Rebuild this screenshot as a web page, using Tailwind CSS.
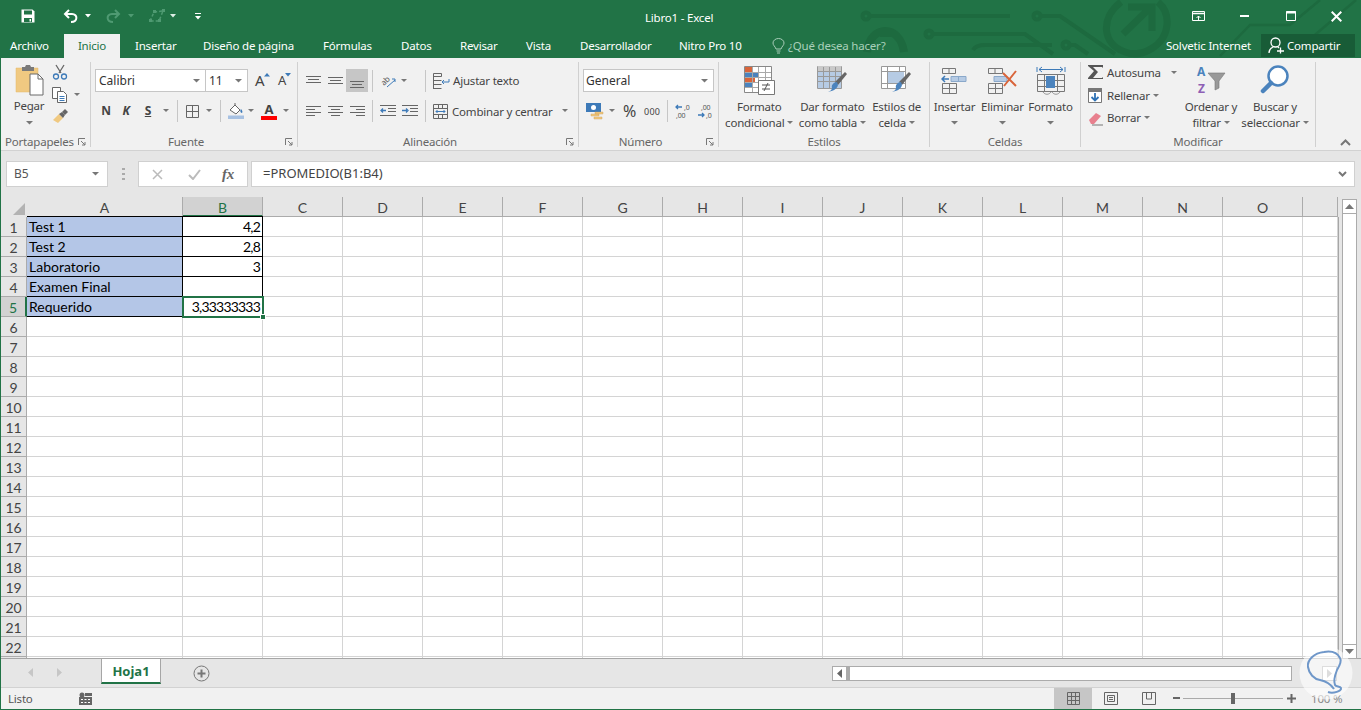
<!DOCTYPE html>
<html lang="es">
<head>
<meta charset="UTF-8">
<title>Libro1 - Excel</title>
<script src="https://cdn.jsdelivr.net/npm/@tailwindcss/browser@4"></script>
</head>
<body class="m-0 overflow-hidden bg-white font-['Noto_Sans',sans-serif] text-[11.5px] tracking-[-.2px] text-[#444]">
<div class="relative w-[1361px] h-[710px] overflow-hidden flex flex-col border-l border-[#217346]">

  <!-- title bar + tabs -->
  <header class="relative w-full h-[58px] shrink-0 bg-[#217346] text-white">
    <svg class="absolute left-[819px] top-0" width="541" height="58" fill="none" stroke="#1d6a3f" stroke-width="4">
      <circle cx="46" cy="16" r="3.5"/><path d="M50 16H190"/><circle cx="217" cy="16" r="3.5"/><path d="M221 16H240L295 54"/>
      <path d="M47 52C50 24 80 24 84 52" stroke-width="8"/><path d="M60 35H72" stroke-width="4"/>
      <circle cx="109" cy="34" r="3.5"/><path d="M113 34H205L233 54"/><path d="M153 50Q156 45 165 45H232"/><circle cx="246" cy="45" r="3.5"/><path d="M250 45H255L268 54"/>
      <path d="M301 2C280 18 282 44 305 52C322 58 345 46 347 25C348 14 344 7 338 2" stroke-width="7"/><path d="M303 34L331 7M308 7H332V31" stroke-width="7"/>
      <path d="M400 56L430 25H470L500 0" stroke-width="2.5"/><path d="M470 56L536 0" stroke-width="2.5"/>
    </svg>

    <!-- quick access -->
    <div class="relative flex items-center h-[32px] pl-[20px]">
      <svg width="14" height="14" viewBox="0 0 14 14"><path d="M.5.500h11l2 2v11H.500z" fill="#fff"/><path d="M3 1.500h8v4H3zM3 9h8v4H3z" fill="#217346"/><path d="M8.500 10h1.500v2.500H8.500z" fill="#fff"/></svg>
      <svg class="ml-[28px]" width="15" height="14" viewBox="0 0 15 14" fill="none" stroke="#fff" stroke-width="2"><path d="M6 1L2 5l4 4M2 5h7c6 0 6 8-1 8"/></svg>
      <svg class="ml-[7px]" width="6" height="4"><path d="M0 0h6L3 3.500z" fill="#fff"/></svg>
      <svg class="ml-[15px]" width="15" height="14" viewBox="0 0 15 14" fill="none" stroke="#4f9a72" stroke-width="2"><path d="M9 1l4 4-4 4M13 5H6c-6 0-6 8 1 8"/></svg>
      <svg class="ml-[7px]" width="6" height="4"><path d="M0 0h6L3 3.500z" fill="#4f9a72"/></svg>
      <svg class="ml-[15px]" width="17" height="14" viewBox="0 0 17 14" fill="none" stroke="#4f9a72" stroke-width="1.500"><path d="M1 12L5 3l9-1-4 10z" stroke-dasharray="3 2"/><path d="M0 10h3v3H0zM4 1h3v3H4zM13 0h3v3h-3zM9 10h3v3H9z" fill="#4f9a72" stroke="none"/></svg>
      <svg class="ml-[4px]" width="6" height="4"><path d="M0 0h6L3 3.500z" fill="#dfeee6"/></svg>
      <svg class="ml-[19px]" width="6" height="7"><path d="M0 0h6v1H0zM0 3h6L3 6.500z" fill="#fff"/></svg>
    </div>
    <div class="absolute left-[644px] top-[9px] leading-[18px]">Libro1 - Excel</div>

    <!-- window buttons -->
    <div class="absolute right-0 top-0 h-[32px] flex items-center">
      <svg class="mr-[35px]" width="13" height="11" fill="none" stroke="#fff"><path d="M.5.500h12v9H.500z"/><path d="M.5 2.500h12" stroke-width="1.500"/><path d="M6.500 9V5M4.500 7l2-2 2 2" /></svg>
      <svg class="mr-[37px]" width="9" height="3"><path d="M0 0h9v2H0z" fill="#fff"/></svg>
      <svg class="mr-[35px]" width="10" height="10" fill="none" stroke="#fff"><path d="M.5.500h9v9h-9z"/><path d="M0 1.500h10" stroke-width="2"/></svg>
      <svg class="mr-[19px]" width="11" height="11" fill="none" stroke="#fff" stroke-width="2"><path d="M.7.700l9.600 9.600M10.300.700L.7 10.300"/></svg>
    </div>

    <!-- tabs -->
    <nav class="absolute left-[-1px] top-[34px] h-[24px] w-full flex items-center">
      <span class="ml-[10px] w-[54px]">Archivo</span>
      <span class="flex items-center justify-center w-[56px] h-[24px] bg-[#f1f1f1] text-[#217346]">Inicio</span>
      <span class="ml-[15px] w-[68px]">Insertar</span>
      <span class="w-[120px]">Diseño de página</span>
      <span class="w-[78px]">Fórmulas</span>
      <span class="w-[59px]">Datos</span>
      <span class="w-[66px]">Revisar</span>
      <span class="w-[54px]">Vista</span>
      <span class="w-[99px]">Desarrollador</span>
      <span class="w-[93px]">Nitro Pro 10</span>
      <svg width="13" height="16" viewBox="0 0 13 16" fill="none" stroke="#a9cdb9"><path d="M4 11C3 8 1 7.500 1 5a5.500 4.500 0 0 1 11 0c0 2.500-2 3-3 6zM4.500 13h4M5 15h3"/></svg>
      <span class="ml-[3px] text-[#a9d0ba]">¿Qué desea hacer?</span>
      <span class="absolute left-[1166px]">Solvetic Internet</span>
      <span class="absolute left-[1261px] top-0 w-[94px] h-[23px] flex items-center bg-[#185c37]">
        <svg class="ml-[7px]" width="16" height="17" viewBox="0 0 16 17" fill="none" stroke="#fff" stroke-width="1.300"><circle cx="7.500" cy="5.500" r="4.500"/><path d="M1 16c0-3 2-5 4-6M10 10l1 1M9 14h7M12.500 10.500v6"/></svg>
        <span class="ml-[3px]">Compartir</span>
      </span>
    </nav>
  </header>

  <!-- ribbon -->
  <section class="relative w-full h-[93px] shrink-0 flex bg-[#f1f1f1] border-b border-[#d2d2d2] text-[#444]">

    <!-- Portapapeles -->
    <div class="relative w-[90px] h-[85px] mt-[4px] border-r border-[#d0d0d0] shrink-0">
      <div class="flex pt-[2px] pl-[15px]">
        <div class="flex flex-col items-center w-[26px]">
          <svg width="29" height="32" viewBox="0 0 29 32">
            <path d="M1 4h22v24H1z" fill="#f0c981" stroke="#e5b968" stroke-width=".5"/><path d="M7 3h3l1-2h4l1 2h3v4H7z" fill="#7a7a7a"/>
            <path d="M15 10h8l5 5v16H15z" fill="#fff" stroke="#6a6a6a"/><path d="M23 10v5h5" fill="none" stroke="#6a6a6a"/>
          </svg>
          <span class="mt-[1px] leading-[17px]">Pegar</span>
          <svg class="mt-[7px]" width="7" height="4"><path d="M0 0h7L3.500 3.500z" fill="#777"/></svg>
        </div>
        <div class="flex flex-col ml-[10px]">
          <svg width="16" height="16" viewBox="0 0 16 16" fill="none"><path d="M4 1l5 8M12 1L7 9" stroke="#666" stroke-width="1.300"/><circle cx="4" cy="12.500" r="2.500" stroke="#3d7ab8" stroke-width="1.300"/><circle cx="12" cy="12.500" r="2.500" stroke="#3d7ab8" stroke-width="1.300"/></svg>
          <div class="flex items-center mt-[7px]">
            <svg width="16" height="16" viewBox="0 0 16 16" fill="#fff" stroke="#666"><path d="M.5.500h8v11h-8z"/><path d="M5.500 4.500h6l3 3v8h-9z"/><path d="M7.500 9.500h5M7.500 11.500h5M7.500 13.500h5" stroke="#3d7ab8"/></svg>
            <svg class="ml-[6px]" width="6" height="4"><path d="M0 0h6L3 3z" fill="#777"/></svg>
          </div>
          <svg class="mt-[6px]" width="17" height="16" viewBox="0 0 17 16"><path d="M1 11l6-6 4 4-5 5z" fill="#f0c981"/><path d="M7 5l3-2 3 3-2 3z" fill="#666"/><path d="M10 3l3-3 3 3-3 3z" fill="#666"/></svg>
        </div>
      </div>
      <div class="absolute left-0 bottom-[-3px] w-full flex items-center text-[#666] leading-[16px] pl-[4px]"><span>Portapapeles</span><svg class="absolute right-[4px] top-[4px]" width="8" height="8" fill="none" stroke="#777"><path d="M.5 7V.5H7M3 3l4 4M7 4v3H4"/></svg></div>
    </div>

    <!-- Fuente -->
    <div class="relative w-[207px] h-[85px] mt-[4px] border-r border-[#d0d0d0] shrink-0">
      <div class="flex items-center pt-[7px] pl-[4px] h-[30px]">
        <div class="w-[111px] h-[23px] bg-white border border-[#c6c6c6] flex items-center px-[3px] justify-between text-[12px] tracking-normal"><span class="text-[#333]">Calibri</span><svg class="mr-[2px]" width="7" height="4"><path d="M0 0h7L3.500 3.500z" fill="#777"/></svg></div>
        <div class="w-[42px] h-[23px] bg-white border border-[#c6c6c6] border-l-0 flex items-center px-[3px] justify-between text-[12px] tracking-normal"><span class="text-[#333]">11</span><svg class="mr-[2px]" width="7" height="4"><path d="M0 0h7L3.500 3.500z" fill="#777"/></svg></div>
        <span class="relative ml-[7px] w-[16px] text-[15px] leading-none">A<svg class="absolute left-[9px] top-[0px]" width="6" height="4"><path d="M0 3.500h6L3 0z" fill="#3d7ab8"/></svg></span>
        <span class="relative ml-[7px] w-[16px] text-[13px] leading-none">A<svg class="absolute left-[7px] top-[-1px]" width="6" height="4"><path d="M0 0h6L3 3.500z" fill="#3d7ab8"/></svg></span>
      </div>
      <div class="flex items-center pt-[7px] pl-[5px] h-[31px]">
        <b class="w-[20px] text-center font-bold text-[12px]">N</b>
        <i class="w-[20px] text-center font-bold text-[12px]">K</i>
        <u class="w-[24px] text-center font-bold text-[12px]">S</u>
        <svg class="ml-[3px]" width="6" height="4"><path d="M0 0h6L3 3z" fill="#777"/></svg>
        <span class="ml-[8px] w-px h-[22px] bg-[#c6c6c6]"></span>
        <svg class="ml-[8px]" width="13" height="13" fill="none" stroke="#666"><path d="M.5.500h12v12H.500zM6.500 1v11M1 6.500h11"/></svg>
        <svg class="ml-[7px]" width="6" height="4"><path d="M0 0h6L3 3z" fill="#777"/></svg>
        <span class="ml-[8px] w-px h-[22px] bg-[#c6c6c6]"></span>
        <svg class="ml-[7px]" width="17" height="16" viewBox="0 0 17 16"><path d="M2 7l5-5 5 5-4 4z" fill="#fff" stroke="#666"/><path d="M7 2V0" stroke="#666"/><path d="M13 6c1 1 2 3 1 4-2 0-2-3-1-4z" fill="#3d7ab8"/><path d="M0 12.500h16V16H0z" fill="#a7c1e2"/></svg>
        <svg class="ml-[3px]" width="6" height="4"><path d="M0 0h6L3 3z" fill="#777"/></svg>
        <span class="ml-[7px] relative w-[16px] h-[18px] text-center font-bold text-[13px] leading-[14px]">A<span class="absolute left-0 bottom-0 w-[16px] h-[4px] bg-[#f00]"></span></span>
        <svg class="ml-[6px]" width="6" height="4"><path d="M0 0h6L3 3z" fill="#777"/></svg>
      </div>
      <div class="absolute left-0 bottom-[-3px] w-full pr-[16px] text-center text-[#666] leading-[16px]">Fuente<svg class="absolute right-[4px] top-[4px]" width="8" height="8" fill="none" stroke="#777"><path d="M.5 7V.5H7M3 3l4 4M7 4v3H4"/></svg></div>
    </div>

    <!-- Alineación -->
    <div class="relative w-[281px] h-[85px] mt-[4px] border-r border-[#d0d0d0] shrink-0">
      <div class="flex items-center pt-[7px] pl-[8px] h-[30px]">
        <svg width="15" height="9" stroke="#666"><path d="M0 .5h15M2 3.500h11M0 6.500h15" /></svg>
        <svg class="ml-[7px]" width="15" height="9" stroke="#666"><path d="M0 1.500h15M2 4.500h11M0 7.500h15"/></svg>
        <span class="ml-[3px] w-[22px] h-[23px] bg-[#c6c6c6] flex items-end justify-center pb-[4px]"><svg width="14" height="7" stroke="#666"><path d="M0 .5h14M2 3.500h10M0 6.500h14"/></svg></span>
        <span class="ml-[4px] w-px h-[22px] bg-[#c6c6c6]"></span>
        <svg class="ml-[7px] overflow-visible" width="16" height="14" viewBox="0 0 16 14" fill="none"><text transform="rotate(-45 6 7)" x="1" y="9" font-size="8" fill="#555" stroke="none">ab</text><path d="M7 13l8-7M12 5h3v3" stroke="#3d7ab8"/></svg>
        <svg class="ml-[5px]" width="6" height="4"><path d="M0 0h6L3 3z" fill="#777"/></svg>
        <span class="ml-[18px] w-px h-[22px] bg-[#c6c6c6]"></span>
        <svg class="ml-[7px]" width="17" height="16" viewBox="0 0 17 16" fill="none" stroke="#666"><path d="M.5.500h8v3h-8zM.5 7.500h8M.5 11.500h8M.5 15.500h8"/><path d="M.5 3v13"/><path d="M16 6v3H9m2-2L9 9l2 2" stroke="#3d7ab8"/></svg>
        <span class="ml-[3px] text-[#444] whitespace-nowrap">Ajustar texto</span>
      </div>
      <div class="flex items-center pt-[7px] pl-[8px] h-[31px]">
        <svg width="15" height="11" stroke="#666"><path d="M0 .5h15M0 3.500h9M0 6.500h15M0 9.500h9"/></svg>
        <svg class="ml-[7px]" width="15" height="11" stroke="#666"><path d="M0 .5h15M3 3.500h9M0 6.500h15M3 9.500h9"/></svg>
        <svg class="ml-[7px]" width="15" height="11" stroke="#666"><path d="M0 .5h15M6 3.500h9M0 6.500h15M6 9.500h9"/></svg>
        <span class="ml-[7px] w-px h-[22px] bg-[#c6c6c6]"></span>
        <svg class="ml-[7px]" width="16" height="12" stroke="#666" fill="none"><path d="M0 .5h16M8 3.500h8M8 6.500h8M0 10.500h16"/><path d="M6 5.500H1m2-2L1 5.500l2 2" stroke="#3d7ab8" stroke-width="1.300"/></svg>
        <svg class="ml-[6px]" width="16" height="12" stroke="#666" fill="none"><path d="M0 .5h16M8 3.500h8M8 6.500h8M0 10.500h16"/><path d="M0 5.500h5M4 3.500l2 2-2 2" stroke="#3d7ab8" stroke-width="1.300"/></svg>
        <span class="ml-[7px] w-px h-[22px] bg-[#c6c6c6]"></span>
        <svg class="ml-[7px]" width="15" height="15" fill="none" stroke="#666"><path d="M.5.500h14v14H.500zM1 4.500h13M1 10.500h13M5.500 1v3M9.500 1v3M5.500 11v3M9.500 11v3"/><path d="M3 7.500h9M4.500 6L3 7.500 4.500 9M10.500 6L12 7.500 10.500 9" stroke="#3d7ab8"/></svg>
        <span class="ml-[4px] pt-[1px] w-[110px] text-[#444] whitespace-nowrap">Combinar y centrar</span>
        <svg width="6" height="4"><path d="M0 0h6L3 3z" fill="#777"/></svg>
      </div>
      <div class="absolute left-0 bottom-[-3px] w-full pr-[16px] text-center text-[#666] leading-[16px]">Alineación<svg class="absolute right-[4px] top-[4px]" width="8" height="8" fill="none" stroke="#777"><path d="M.5 7V.5H7M3 3l4 4M7 4v3H4"/></svg></div>
    </div>

    <!-- Número -->
    <div class="relative w-[140px] h-[85px] mt-[4px] border-r border-[#d0d0d0] shrink-0">
      <div class="flex items-center pt-[7px] pl-[4px] h-[30px]">
        <div class="w-[131px] h-[23px] bg-white border border-[#c6c6c6] flex items-center px-[2px] justify-between text-[12px] tracking-normal"><span class="text-[#333]">General</span><svg class="mr-[3px]" width="7" height="4"><path d="M0 0h7L3.500 3.500z" fill="#777"/></svg></div>
      </div>
      <div class="flex items-center pt-[7px] pl-[7px] h-[31px]">
        <svg width="18" height="17" viewBox="0 0 18 17"><path d="M0 0h15v9H0z" fill="#3d7ab8"/><circle cx="7.500" cy="4.500" r="2.500" fill="#fff"/><path d="M9 9h8v2H9zM5 11h8v2H5zM8 14h8v2H8z" fill="#f0c981" stroke="#c99f52" stroke-width=".4"/></svg>
        <svg class="ml-[5px]" width="6" height="4"><path d="M0 0h6L3 3z" fill="#777"/></svg>
        <span class="ml-[8px] text-[16px] leading-none">%</span>
        <span class="ml-[8px] text-[9px] leading-none tracking-[.2px]">000</span>
        <span class="ml-[7px] w-px h-[22px] bg-[#c6c6c6]"></span>
        <svg class="ml-[7px]" width="16" height="15" viewBox="0 0 16 15"><path d="M7 3H1m2-2L1 3l2 2" fill="none" stroke="#3d7ab8" stroke-width="1.300"/><text x="9" y="6" font-size="7" fill="#555">,0</text><text x="1" y="14" font-size="7" fill="#555">,00</text></svg>
        <svg class="ml-[7px]" width="16" height="15" viewBox="0 0 16 15"><text x="3" y="6" font-size="7" fill="#555">,00</text><path d="M0 11h6M4 9l2 2-2 2" fill="none" stroke="#3d7ab8" stroke-width="1.300"/><text x="8" y="14" font-size="7" fill="#555">,0</text></svg>
      </div>
      <div class="absolute left-0 bottom-[-3px] w-full pr-[16px] text-center text-[#666] leading-[16px]">Número<svg class="absolute right-[4px] top-[4px]" width="8" height="8" fill="none" stroke="#777"><path d="M.5 7V.5H7M3 3l4 4M7 4v3H4"/></svg></div>
    </div>

    <!-- Estilos -->
    <div class="relative w-[211px] h-[85px] mt-[4px] border-r border-[#d0d0d0] shrink-0">
      <div class="flex pt-[2px]">
        <div class="flex flex-col items-center w-[82px]">
          <svg width="31" height="32" viewBox="0 0 31 32"><path d="M.5 2.500h27v26H.500z" fill="#fff" stroke="#888"/><path d="M1 3h7v5H1z" fill="#d9653b"/><path d="M1 8h13v5H1z" fill="#4b83bd"/><path d="M1 13h10v5H1z" fill="#d9653b"/><path d="M1 18h7v5H1z" fill="#4b83bd"/><path d="M8.500 3v25M14.500 3v25M21.500 3v13M1 8.500h26M1 13.500h26M1 18.500h14M1 23.500h14" stroke="#a9a9a9" fill="none"/><path d="M14.500 16.500h16v14h-16z" fill="#fff" stroke="#777"/><path d="M18 21h8M18 25h8M24 19l-4 8" stroke="#555" fill="none"/></svg>
          <span class="mt-[2px] leading-[17px]">Formato</span>
          <span class="leading-[15px] whitespace-nowrap">condicional <svg class="inline align-[2px]" width="6" height="4"><path d="M0 0h6L3 3z" fill="#777"/></svg></span>
        </div>
        <div class="flex flex-col items-center w-[62px] ml-[2px]">
          <svg width="31" height="32" viewBox="0 0 31 32"><path d="M.5 2.500h24v22H.500z" fill="#fff" stroke="#999"/><path d="M1 7h23v17H1z" fill="#b6cbe4"/><path d="M1 2h23v5H1z" fill="#c9c9c9"/><path d="M6.500 3v21M12.500 3v21M18.500 3v21M1 7.500h23M1 12.500h23M1 17.500h23" stroke="#999" fill="none"/><path d="M18 18L28 8l2 2-9 11z" fill="#666"/><path d="M15 24c-1-3 2-6 5-6l1 3c-1 4-5 6-10 7 2-1 4-2 4-4z" fill="#4b83bd"/></svg>
          <span class="mt-[2px] leading-[17px] whitespace-nowrap">Dar formato</span>
          <span class="leading-[15px] whitespace-nowrap">como tabla <svg class="inline align-[2px]" width="6" height="4"><path d="M0 0h6L3 3z" fill="#777"/></svg></span>
        </div>
        <div class="flex flex-col items-center w-[66px] ml-[1px]">
          <svg width="31" height="32" viewBox="0 0 31 32"><path d="M.5 2.500h24v22H.500z" fill="#fff" stroke="#999"/><path d="M6 7h17v12H6z" fill="#b6cbe4"/><path d="M6.500 3v21M18.500 3v4M1 7.500h23M1 19.500h23" stroke="#999" fill="none"/><path d="M18 18L28 8l2 2-9 11z" fill="#666"/><path d="M15 24c-1-3 2-6 5-6l1 3c-1 4-5 6-10 7 2-1 4-2 4-4z" fill="#4b83bd"/></svg>
          <span class="mt-[2px] leading-[17px] whitespace-nowrap">Estilos de</span>
          <span class="leading-[15px] whitespace-nowrap">celda <svg class="inline align-[2px]" width="6" height="4"><path d="M0 0h6L3 3z" fill="#777"/></svg></span>
        </div>
      </div>
      <div class="absolute left-0 bottom-[-3px] w-full text-center text-[#666] leading-[16px]">Estilos</div>
    </div>

    <!-- Celdas -->
    <div class="relative w-[151px] h-[85px] mt-[4px] border-r border-[#d0d0d0] shrink-0">
      <div class="flex pt-[2px]">
        <div class="flex flex-col items-center w-[49px]">
          <svg width="28" height="32" viewBox="0 0 28 32" fill="none" stroke="#777"><path d="M1.500 4.500h13v5h-13zM8 5v4M1.500 19.500h14v10h-14zM8.500 20v9M2 24.500h13"/><path d="M10 12.500h15v5H10zM17.500 13v4" fill="#b6cbe4" stroke="#8aa8ca"/><path d="M8 15H1m3-3l-3 3 3 3" stroke="#3d7ab8" stroke-width="1.500"/></svg>
          <span class="mt-[2px] leading-[17px]">Insertar</span>
          <svg class="mt-[6px]" width="7" height="4"><path d="M0 0h7L3.500 3.500z" fill="#777"/></svg>
        </div>
        <div class="flex flex-col items-center w-[47px]">
          <svg width="32" height="32" viewBox="0 0 32 32" fill="none" stroke="#777"><path d="M1.500 4.500h14v5h-14zM8 5v4M1.500 19.500h14v10h-14zM8.500 20v9M2 24.500h13"/><path d="M7 12.500h13v5H7z" fill="#b6cbe4" stroke="#8aa8ca"/><path d="M16 9l13 13M29 7L17 22" stroke="#d9653b" stroke-width="2"/></svg>
          <span class="mt-[2px] leading-[17px]">Eliminar</span>
          <svg class="mt-[6px]" width="7" height="4"><path d="M0 0h7L3.500 3.500z" fill="#777"/></svg>
        </div>
        <div class="flex flex-col items-center w-[49px]">
          <svg width="30" height="32" viewBox="0 0 30 32" fill="none" stroke="#777"><path d="M1.500 10.500h27v17h-27zM8.500 11v16M21.500 11v16M1 16.500h28M1 22.500h28"/><path d="M10 12h9v12h-9z" fill="#4b83bd" stroke="none"/><path d="M1 3v5M29 3v5M3 5.500h24M6 3L3 5.500 6 8M24 3l3 2.500L24 8" stroke="#3d7ab8"/><path d="M7 28c2 3 6 3 8 0M16 28c2 3 6 3 8 0" stroke="#999"/></svg>
          <span class="mt-[2px] leading-[17px]">Formato</span>
          <svg class="mt-[6px]" width="7" height="4"><path d="M0 0h7L3.500 3.500z" fill="#777"/></svg>
        </div>
      </div>
      <div class="absolute left-0 bottom-[-3px] w-full text-center text-[#666] leading-[16px]">Celdas</div>
    </div>

    <!-- Modificar -->
    <div class="relative w-[235px] h-[85px] mt-[4px] border-r border-[#d0d0d0] shrink-0">
      <div class="flex">
        <div class="flex flex-col pl-[7px] w-[120px] -mt-[1px]">
          <div class="flex items-center h-[23px]">
            <svg width="16" height="15" viewBox="0 0 16 15"><path d="M0 0h15v3l-1-1H5l5 5-5 6h9l1-1v2H0v-1l6-7L0 1z" fill="#555"/></svg>
            <span class="ml-[3px] w-[60px]">Autosuma</span>
            <svg class="ml-[4px]" width="6" height="4"><path d="M0 0h6L3 3z" fill="#777"/></svg>
          </div>
          <div class="flex items-center h-[23px]">
            <svg width="15" height="15" viewBox="0 0 15 15" fill="#fff" stroke="#777"><path d="M.5.500h13v14H.500z"/><path d="M.5.500h13v3H.500z" fill="#777"/><path d="M7 5v7M3.500 9L7 12.500 10.500 9" fill="none" stroke="#2f72b5" stroke-width="1.800"/></svg>
            <span class="ml-[4px]">Rellenar</span>
            <svg class="ml-[3px]" width="6" height="4"><path d="M0 0h6L3 3z" fill="#777"/></svg>
          </div>
          <div class="flex items-center h-[22px]">
            <svg width="15" height="15" viewBox="0 0 15 15"><path d="M1 9l7-7 5 3-7 8H3z" fill="#e8808e"/><path d="M4 14h11" stroke="#777"/></svg>
            <span class="ml-[4px]">Borrar</span>
            <svg class="ml-[3px]" width="6" height="4"><path d="M0 0h6L3 3z" fill="#777"/></svg>
          </div>
        </div>
        <div class="flex flex-col items-center w-[72px] -ml-[26px] pt-[2px]">
          <svg width="31" height="32" viewBox="0 0 31 32"><text x="1" y="12" font-size="12" font-weight="700" fill="#4b83bd" font-family="Noto Sans">A</text><text x="2" y="29" font-size="12" font-weight="700" fill="#8e5fb5" font-family="Noto Sans">Z</text><path d="M12 9h17l-6 8v7l-4 2v-9z" fill="#999" stroke="#777" stroke-width=".6"/></svg>
          <span class="mt-[2px] leading-[17px] whitespace-nowrap">Ordenar y</span>
          <span class="leading-[15px] whitespace-nowrap">filtrar <svg class="inline align-[2px]" width="6" height="4"><path d="M0 0h6L3 3z" fill="#777"/></svg></span>
        </div>
        <div class="flex flex-col items-center w-[70px] ml-[-7px] pt-[2px]">
          <svg width="30" height="32" viewBox="0 0 30 32" fill="none"><circle cx="18" cy="12" r="9.500" stroke="#4b83bd" stroke-width="2.500" fill="#fff"/><path d="M11 19L3 27" stroke="#4b83bd" stroke-width="4.500" stroke-linecap="round"/></svg>
          <span class="mt-[2px] leading-[17px] whitespace-nowrap">Buscar y</span>
          <span class="leading-[15px] whitespace-nowrap">seleccionar <svg class="inline align-[2px]" width="6" height="4"><path d="M0 0h6L3 3z" fill="#777"/></svg></span>
        </div>
      </div>
      <div class="absolute left-0 bottom-[-3px] w-full text-center text-[#666] leading-[16px]">Modificar</div>
    </div>
    <svg class="absolute left-[1339px] top-[81px]" width="11" height="7" fill="none" stroke="#777" stroke-width="2"><path d="M1 6l4.500-4.500L10 6"/></svg>
  </section>

  <!-- formula bar -->
  <div class="w-full h-[46px] shrink-0 bg-[#e6e6e6] flex items-start pt-[10px] pl-[5px] text-[#444]">
    <div class="w-[102px] h-[26px] bg-white border border-[#d0d0d0] flex items-center justify-between pl-[7px] pr-[8px] text-[#555] text-[12px] tracking-normal"><span>B5</span><svg width="7" height="4"><path d="M0 0h7L3.500 3.500z" fill="#777"/></svg></div>
    <svg class="ml-[14px] mt-[7px]" width="3" height="12"><path d="M0 0h3v2H0zM0 5h3v2H0zM0 10h3v2H0z" fill="#aaa"/></svg>
    <div class="ml-[13px] w-[110px] h-[26px] bg-white border border-[#d0d0d0] flex items-center pl-[13px]">
      <svg width="11" height="11" fill="none" stroke="#bbb" stroke-width="1.500"><path d="M1 1l9 9M10 1l-9 9"/></svg>
      <svg class="ml-[25px]" width="13" height="11" fill="none" stroke="#bbb" stroke-width="2"><path d="M1 6l4 4 7-9"/></svg>
      <i class="ml-[21px] font-['Liberation_Serif',serif] text-[15px] font-bold text-[#666] leading-none">fx</i>
    </div>
    <div class="ml-[3px] w-[1104px] h-[26px] bg-white border border-[#d0d0d0] flex items-center justify-between pl-[11px] pr-[7px] text-[#444] text-[13px] tracking-normal"><span>=PROMEDIO(B1:B4)</span><svg width="9" height="6" fill="none" stroke="#777" stroke-width="2"><path d="M1 1l3.500 3.500L8 1"/></svg></div>
  </div>

  <!-- sheet grid and scrollbar -->
  <div class="relative w-full h-[461px] shrink-0 flex bg-[#e6e6e6]">
    <div id="grid" class="w-[1337px] h-[461px] overflow-hidden font-['Lato',sans-serif] tracking-normal"></div>
    <div class="w-px h-[441px] mt-[20px] bg-[#a6a6a6]"></div>
    <div class="relative ml-[3px] w-[15px] flex flex-col mt-[2px] h-[460px]">
      <div class="h-[15px] bg-white border border-[#ababab] flex items-center justify-center"><svg width="9" height="5"><path d="M0 5h9L4.500 0z" fill="#777"/></svg></div>
      <div class="flex-1 bg-white border-x border-[#ababab]"></div>
      <div class="h-[15px] bg-white border border-[#ababab] flex items-center justify-center"><svg width="9" height="5"><path d="M0 0h9L4.500 5z" fill="#777"/></svg></div>
    </div>
    <!-- selected cell frame -->
    <div class="absolute left-[181px] top-[99px] w-[82px] h-[22px] border-2 border-[#217346]"></div>
    <div class="absolute left-[259px] top-[117px] w-[6px] h-[6px] bg-[#217346] border border-white"></div>
  </div>

  <!-- sheet tabs -->
  <div class="w-full h-[29px] shrink-0 bg-[#e6e6e6] border-t border-[#a6a6a6] flex items-start text-[#777]">
    <svg class="ml-[27px] mt-[9px]" width="5" height="9"><path d="M5 0v9L0 4.500z" fill="#c6c6c6"/></svg>
    <svg class="ml-[24px] mt-[9px]" width="5" height="9"><path d="M0 0v9l5-4.500z" fill="#c6c6c6"/></svg>
    <div class="ml-[39px] w-[60px] h-[25px] pt-[2px] bg-white border-x border-[#a6a6a6] border-b-2 border-b-[#217346] flex items-center justify-center font-bold text-[13px] tracking-normal text-[#217346]">Hoja1</div>
    <svg class="ml-[32px] mt-[6px]" width="17" height="17" fill="none" stroke="#777"><circle cx="8.500" cy="8.500" r="7.500"/><path d="M4.500 8.500h8M8.500 4.500v8" stroke-width="2"/></svg>
    <div class="ml-[622px] mt-[7px] flex h-[15px]">
      <div class="w-[15px] bg-white border border-[#ababab] flex items-center justify-center"><svg width="5" height="9"><path d="M5 0v9L0 4.500z" fill="#666"/></svg></div>
      <div class="w-[445px] bg-white border border-[#ababab] border-l-[3px]"></div>
      <div class="ml-[30px] w-[15px] bg-white border border-[#ababab] flex items-center justify-center"><svg width="5" height="9"><path d="M0 0v9l5-4.500z" fill="#aaa"/></svg></div>
    </div>
  </div>

  <!-- status bar -->
  <footer class="w-full flex-1 bg-[#f1f1f1] border-t border-[#d2d2d2] border-b border-b-[#217346] flex items-center text-[#555]">
    <span class="ml-[7px] w-[24px]">Listo</span>
    <svg class="ml-[47px]" width="13" height="13" viewBox="0 0 13 13"><circle cx="3" cy="3" r="2.500" fill="#666"/><path d="M6 1h7v3H6zM0 5h13v8H0z" fill="#666"/><path d="M2 7h2v1H2zM5.500 7h2v1h-2zM9 7h2v1H9zM2 10h2v1H2zM5.500 10h2v1h-2zM9 10h2v1H9z" fill="#fff"/></svg>
    <div class="ml-[962px] w-[38px] h-[21px] bg-[#c6c6c6] flex items-center justify-center"><svg width="13" height="13" fill="none" stroke="#666"><path d="M.5.500h12v12H.500zM4.500 1v11M8.500 1v11M1 4.500h11M1 8.500h11"/></svg></div>
    <svg class="ml-[12px]" width="14" height="13" fill="none" stroke="#666"><path d="M.5.500h13v12H.500zM3.500 3.500h7v6h-7zM5 5.500h4M5 7.500h4"/></svg>
    <svg class="ml-[24px]" width="14" height="13" fill="none" stroke="#666"><path d="M.5.500h13v12H.500zM4.500 1v6h5V1"/></svg>
    <svg class="ml-[17px]" width="7" height="3"><path d="M0 0h7v2H0z" fill="#666"/></svg>
    <div class="relative ml-[3px] w-[100px] h-px bg-[#aaa]"><div class="absolute left-[48px] top-[-5px] w-[4px] h-[11px] bg-[#666]"></div></div>
    <svg class="ml-[4px]" width="9" height="9"><path d="M3.500 0h2v3.500H9v2H5.500V9h-2V5.500H0v-2h3.500z" fill="#666"/></svg>
    <span class="ml-[15px] text-[#888]">100 %</span>
  </footer>

  <!-- watermark logo -->
  <svg class="absolute left-[1297px] top-[645px]" width="56" height="60" viewBox="0 0 56 60" fill="none">
    <circle cx="28" cy="28" r="26.500" fill="#fff" fill-opacity=".6"/>
    <path d="M30 47C35 49 44 46 43 43C42 41 38 42 37 40C35 35 37 30 39 25C42 20 44 16 42 13C39 7 32 6 26 7C16 8 9 15 10 22C11 29 16 34 22 35C27 36 32 38 36 44" stroke="#6f97c9" stroke-width="2"/>
  </svg>
</div>

<script>
  // build the sheet
  const cols = ['A','B','C','D','E','F','G','H','I','J','K','L','M','N','O',''];
  const widths = ['w-[156px]','w-[80px]','w-[80px]','w-[80px]','w-[80px]','w-[80px]','w-[80px]','w-[80px]','w-[80px]','w-[80px]','w-[80px]','w-[80px]','w-[80px]','w-[80px]','w-[80px]','w-[35px]'];
  const data = {
    1: ['Test 1', '4,2'],
    2: ['Test 2', '2,8'],
    3: ['Laboratorio', '3'],
    4: ['Examen Final', ''],
    5: ['Requerido', '3,33333333']
  };
  let html = '<div class="flex h-[20px]"><div class="w-[26px] bg-[#e6e6e6] flex items-end justify-end"><svg class="mb-[2px] mr-[2px]" width="12" height="12"><path d="M12 0v12H0z" fill="#b3b3b3"/></svg></div>';
  cols.forEach((c, i) => {
    const sel = c === 'B';
    html += '<div class="' + widths[i] + (sel
      ? ' bg-[#d2d2d2] text-[#217346] border-b-2 border-b-[#217346] border-r border-r-[#ababab]'
      : ' bg-[#e6e6e6] text-[#444] border-b border-b-[#ababab] border-r border-r-[#ababab]') +
      ' flex items-center justify-center text-[14px] pt-[2px]">' + c + '</div>';
  });
  html += '</div>';
  for (let r = 1; r <= 23; r++) {
    const sel = r === 5;
    html += '<div class="flex h-[20px]"><div class="w-[26px] flex items-center justify-center text-[14px] pt-[1px] ' + (sel
      ? 'bg-[#d2d2d2] text-[#217346] border-r-2 border-r-[#217346] border-b border-b-[#ababab]'
      : 'bg-[#e6e6e6] text-[#444] border-r border-r-[#ababab] border-b border-b-[#ababab]') + '">' + (r < 23 ? r : '') + '</div>';
    cols.forEach((c, i) => {
      const d = data[r];
      const black = d && i < 2;
      let cls = widths[i] + ' flex items-center text-[14px] text-black px-[2px] border-r border-b whitespace-nowrap ';
      cls += black ? 'border-black ' : 'border-[#d4d4d4] ';
      if (r === 1 && i < 2) cls += 'shadow-[0_-1px_0_#000] ';
      if (black && i === 0) cls += 'bg-[#b4c6e7] ';
      if (black && i === 1) cls += 'justify-end bg-white tracking-[-.8px] ';
      if (!black) cls += 'bg-white ';
      html += '<div class="' + cls + '">' + (black ? d[i] : '') + '</div>';
    });
    html += '</div>';
  }
  document.getElementById('grid').innerHTML = html;
</script>
</body>
</html>
